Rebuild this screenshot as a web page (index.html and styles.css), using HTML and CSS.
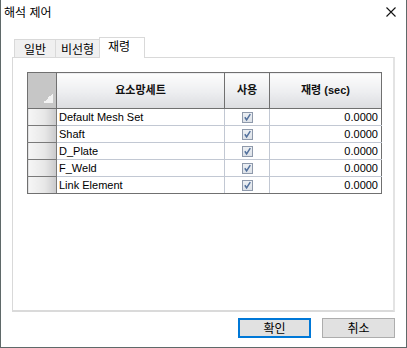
FILE: index.html
```html
<!DOCTYPE html>
<html lang="ko">
<head>
    <meta charset="UTF-8">
    <title>해석 제어</title>
    <link rel="stylesheet" href="styles.css">
</head>
<body>
    <div class="dialog">
        <div class="titlebar">
            <span class="title">해석 제어</span>
            <svg class="close" width="10" height="10" viewBox="0 0 10 10">
                <path d="M0.5 0.5 L9.5 9.5 M9.5 0.5 L0.5 9.5" stroke="#111" stroke-width="1.1" fill="none"/>
            </svg>
        </div>
        <div class="content">
            <div class="tabs">
                <div class="tab t1">일반</div>
                <div class="tab t2">비선형</div>
                <div class="tab active">재령</div>
            </div>
            <div class="panel">
                <table class="grid">
                    <colgroup>
                        <col class="c-head">
                        <col class="c-name">
                        <col class="c-use">
                        <col class="c-age">
                    </colgroup>
                    <thead>
                        <tr>
                            <th class="corner"></th>
                            <th>요소망세트</th>
                            <th>사용</th>
                            <th>재령 <span class="lat">(sec)</span></th>
                        </tr>
                    </thead>
                    <tbody>
                        <tr><td class="rh"></td><td class="name">Default Mesh Set</td><td class="chk"><span class="box"></span></td><td class="num">0.0000</td></tr>
                        <tr><td class="rh"></td><td class="name">Shaft</td><td class="chk"><span class="box"></span></td><td class="num">0.0000</td></tr>
                        <tr><td class="rh"></td><td class="name">D_Plate</td><td class="chk"><span class="box"></span></td><td class="num">0.0000</td></tr>
                        <tr><td class="rh"></td><td class="name">F_Weld</td><td class="chk"><span class="box"></span></td><td class="num">0.0000</td></tr>
                        <tr><td class="rh"></td><td class="name">Link Element</td><td class="chk"><span class="box"></span></td><td class="num">0.0000</td></tr>
                    </tbody>
                </table>
            </div>
        </div>
        <div class="footer">
            <button class="btn ok">확인</button>
            <button class="btn">취소</button>
        </div>
    </div>
</body>
</html>
```

FILE: styles.css
```css
body{margin: 0;background-color: #ffffff;font-family: 'Noto Sans CJK KR', sans-serif;font-size: 12px;color: #000;}

        .dialog{
            width: 407px;
            height: 348px;
            box-sizing: border-box;
            border: 1px solid #5f6969;
            border-top: none;
            display: flex;
            flex-direction: column;
            background-color: #ffffff;
        }
        .titlebar{
            height: 28px;
            display: flex;
            align-items: center;
            justify-content: space-between;
            padding: 0 10px 0 3px;
        }
        .title{
            font-size: 12px;
            line-height: 14px;
            margin-top: -5px;
        }
        .close{
            margin-top: -5px;
        }
        .content{
            padding: 9px 11px 0 11px;
        }
        .tabs{
            height: 20px;
            display: flex;
            align-items: flex-end;
            padding-left: 2px;
        }
        .tab{
            box-sizing: border-box;
            height: 18px;
            border: 1px solid #d9d9d9;
            border-bottom: none;
            background-color: #f0f0f0;
            text-align: center;
            line-height: 17px;
            font-size: 12px;
        }
        .t1{width: 42px;}
        .t2{width: 45px;margin-left: -1px;}
        .tab.active{
            width: 46px;
            height: 21px;
            margin-left: -1px;
            margin-bottom: -1px;
            background-color: #ffffff;
            position: relative;
            z-index: 1;
            line-height: 16px;
            text-align: left;
            padding-left: 8px;
        }
        .panel{
            box-sizing: border-box;
            height: 255px;
            border: 1px solid #d9d9d9;
            border-right: 2px solid #e3e3e3;
            border-bottom: 2px solid #dadada;
            padding: 14px 0 0 14px;
        }
        .grid{
            border-collapse: collapse;
            table-layout: fixed;
            width: 354px;
            font-family: 'Liberation Sans', Arial, sans-serif;
            font-size: 11px;
        }
        .c-head{width: 29px;}
        .c-name{width: 168px;}
        .c-use{width: 45px;}
        .c-age{width: 112px;}
        .grid th{
            height: 31px;
            padding: 0 0 4px 0;
            border: 1px solid #707070;
            background: linear-gradient(#fdfdfd, #eeeff1 50%, #dcdde0);
            font-family: 'Liberation Sans', 'Noto Sans CJK KR', sans-serif;
            font-weight: bold;
            font-size: 11px;
            color: #111;
        }
        .grid th .lat{font-size: 11px;}
        .grid th.corner{
            background: linear-gradient(to top left, #f3f3f3 50%, transparent 50%) no-repeat right 3px bottom 5px / 10px 10px, #c6c6c6;
        }
        .grid td{
            height: 16px;
            padding: 0;
            border: 1px solid #c2c8d3;
            white-space: nowrap;
            overflow: hidden;
        }
        .grid td.rh{
            border: 1px solid #7a7a7a;
            border-left-color: #707070;
            background: linear-gradient(to right, #f6f6f6, #e6e6e6 60%, #c9c9cb);
        }
        .grid tr:last-child td{border-bottom-color: #707070;}
        .grid td:last-child{border-right-color: #707070;}
        .grid td.name{
            padding-left: 2px;
            border-left-color: #707070;
        }
        .grid td.chk{text-align: center;}
        .grid td.num{
            text-align: right;
            padding-right: 3px;
        }
        .box{
            display: inline-block;
            vertical-align: middle;
            box-sizing: border-box;
            width: 11px;
            height: 11px;
            margin-top: -2px;
            border: 1px solid #8e99ab;
            background: url("data:image/svg+xml;utf8,<svg xmlns='http://www.w3.org/2000/svg' width='9' height='9' viewBox='0 0 9 9'><path d='M1.8 4.2 L3.6 6.8 L7.3 1.2' stroke='%2352709c' stroke-width='1.5' fill='none'/></svg>") no-repeat center, linear-gradient(#eceff3, #dde2e8);
        }
        .footer{
            display: flex;
            justify-content: flex-end;
            gap: 11px;
            padding: 6px 11px 0 0;
        }
        .btn{
            box-sizing: border-box;
            width: 73px;
            height: 20px;
            background-color: #e1e1e1;
            border: 1px solid #adadad;
            font-family: 'Noto Sans CJK KR', sans-serif;
            font-size: 12px;
            line-height: 16px;
            padding: 0;
            color: #000;
        }
        .btn.ok{
            border: 2px solid #0078d7;
        }
```
